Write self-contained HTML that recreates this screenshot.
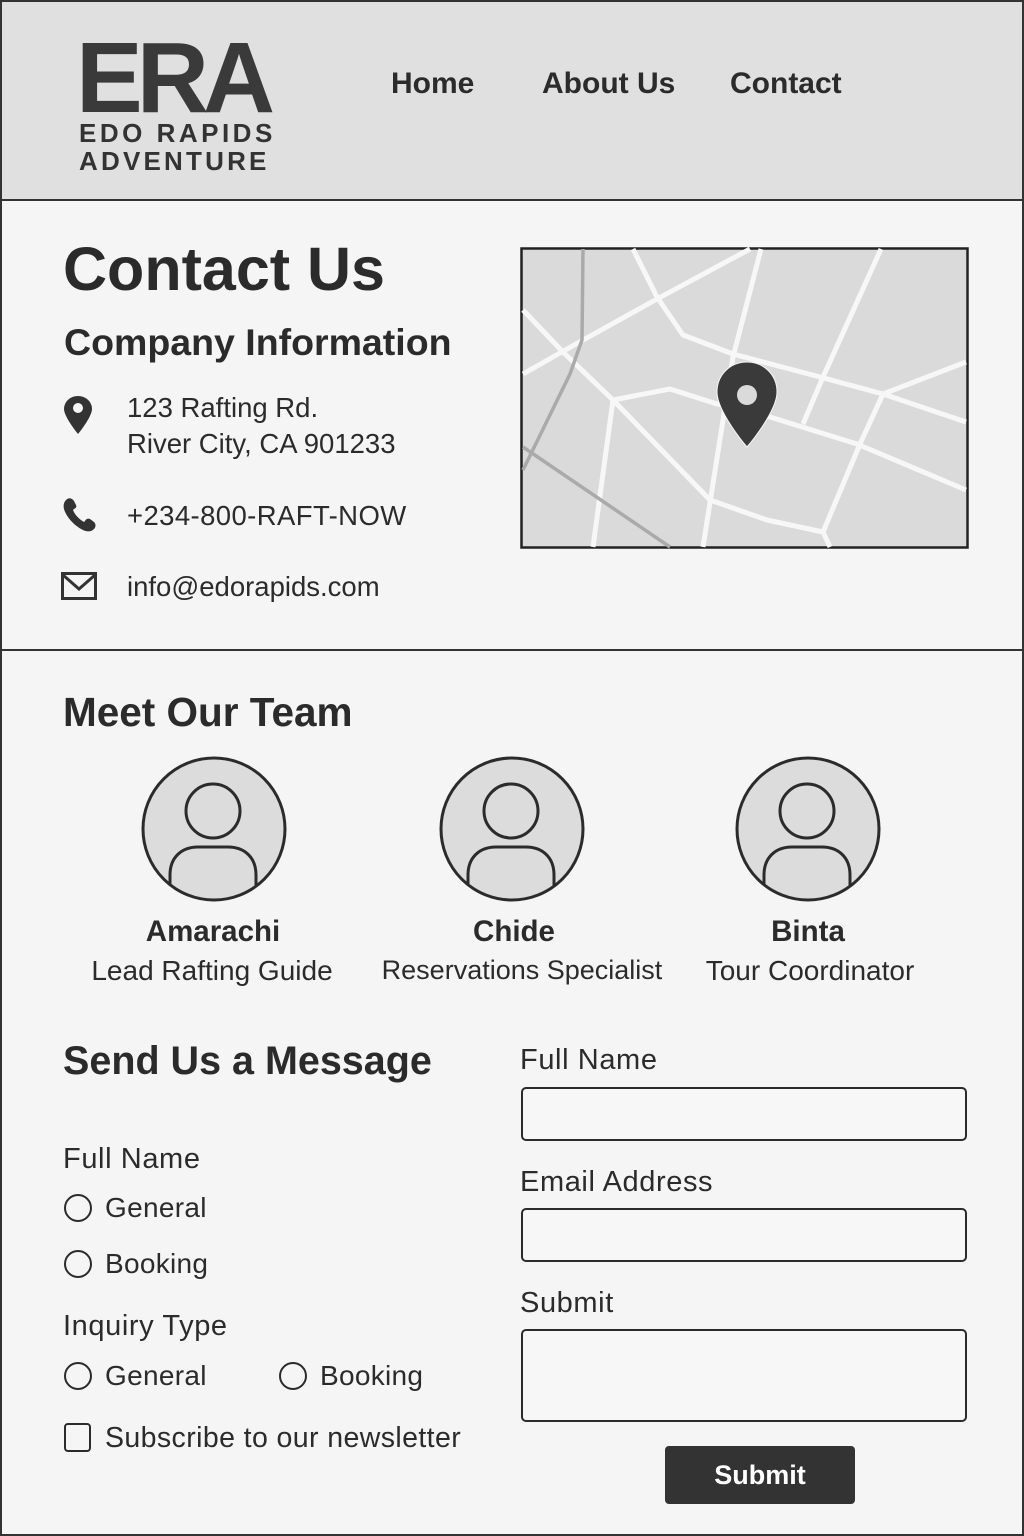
<!DOCTYPE html>
<html><head><meta charset="utf-8"><style>
*{margin:0;padding:0;box-sizing:border-box}
body{width:1024px;height:1536px;background:#f5f5f5;font-family:"Liberation Sans",sans-serif;color:#2b2b2b;position:relative;overflow:hidden}
.a{position:absolute;line-height:1;white-space:nowrap}
.b{font-weight:bold}
.frame{position:absolute;left:0;top:0;width:1024px;height:1536px;border:2px solid #333;pointer-events:none}
.hdr{position:absolute;left:0;top:0;width:1024px;height:201px;background:#e0e0e0;border-bottom:2px solid #333}
.line{position:absolute;left:0;width:1024px;height:2px;background:#333}
.inp{position:absolute;left:521px;width:446px;border:2px solid #2b2b2b;border-radius:5px;background:#f7f7f7}
.rad{position:absolute;width:28px;height:28px;border:2.5px solid #2b2b2b;border-radius:50%}
.l{font-size:29px;letter-spacing:0.6px}
.r{font-size:28px;letter-spacing:0.3px}
</style></head><body>
<div class="hdr"></div>
<div class="a b" style="left:76px;top:28px;font-size:100px;letter-spacing:-6px;color:#3a3a3a">ERA</div>
<div class="a b" style="left:79px;top:120px;font-size:26px;letter-spacing:3.5px;color:#333">EDO RAPIDS</div>
<div class="a b" style="left:79px;top:148px;font-size:26px;letter-spacing:3.2px;color:#333">ADVENTURE</div>
<div class="a b" style="left:391px;top:69px;font-size:30px">Home</div>
<div class="a b" style="left:542px;top:69px;font-size:30px">About Us</div>
<div class="a b" style="left:730px;top:69px;font-size:30px">Contact</div>

<div class="a b" style="left:63px;top:239px;font-size:61px">Contact Us</div>
<div class="a b" style="left:64px;top:324px;font-size:37.5px">Company Information</div>
<svg class="a" style="left:60px;top:394px" width="36" height="42" viewBox="0 0 36 42"><path d="M18 2C10 2 4 8 4 15c0 8 14 25 14 25s14-17 14-25C32 8 26 2 18 2z" fill="#333"/><circle cx="18" cy="14" r="5" fill="#f5f5f5"/></svg>
<div class="a" style="left:127px;top:394px;font-size:27.5px">123 Rafting Rd.</div>
<div class="a" style="left:127px;top:430px;font-size:27.5px">River City, CA 901233</div>
<svg class="a" style="left:60px;top:496px" width="40" height="36" viewBox="0 0 40 36"><path d="M6 4c3-3 6-2 8 1l2 4c1 2 0 3-2 4l-1 1c2 5 6 9 11 12l1-1c1-2 3-3 5-2l4 3c2 2 2 5 0 7-3 3-7 3-11 1C13 29 6 20 4 13c-1-4 0-7 2-9z" fill="#333"/></svg>
<div class="a" style="left:127px;top:502px;font-size:27.5px;letter-spacing:0.4px">+234-800-RAFT-NOW</div>
<svg class="a" style="left:60px;top:570px" width="38" height="32" viewBox="0 0 38 32"><rect x="2.5" y="3.5" width="33" height="25" fill="none" stroke="#333" stroke-width="3"/><path d="M3 5l16 14L35 5" fill="none" stroke="#333" stroke-width="3"/></svg>
<div class="a" style="left:127px;top:573px;font-size:27.5px">info@edorapids.com</div>

<svg class="a" style="left:520px;top:247px" width="449" height="302" viewBox="0 0 449 302">
<rect x="1.5" y="1.5" width="446" height="299" fill="#dadada" stroke="#222" stroke-width="2.5"/>
<g fill="none" stroke="#f7f7f7" stroke-width="5" stroke-linejoin="round">
<polyline points="113,2 137,50 163,88 213,107 300,130 363,147 446,175"/>
<polyline points="3,63 43,105 93,153 190,253 247,273 303,285 310,300"/>
<polyline points="3,127 47,102 137,52 230,2"/>
<polyline points="241,2 213,110 203,173 183,300"/>
<polyline points="361,2 303,130 283,177"/>
<polyline points="93,153 150,142 197,157 250,170 337,197 446,243"/>
<polyline points="446,115 363,147 340,197 303,285"/>
<polyline points="93,153 73,300"/>
</g>
<g fill="none" stroke="#aaa" stroke-width="3.5">
<polyline points="63,2 62,93 50,127 3,223"/>
<polyline points="3,200 150,300"/>
</g>
<path d="M227 115c-17 0-30 13-30 30 0 20 30 55 30 55s30-35 30-55c0-17-13-30-30-30z" fill="#3a3a3a" stroke="#f7f7f7" stroke-width="1"/>
<circle cx="227" cy="148" r="10" fill="#dadada"/>
</svg>

<div class="line" style="top:649px"></div>
<div class="a b" style="left:63px;top:692px;font-size:40.5px">Meet Our Team</div>

<svg class="a" style="left:140px;top:755px" width="148" height="148" viewBox="0 0 148 148"><defs><clipPath id="c"><circle cx="74" cy="74" r="71"/></clipPath></defs><circle cx="74" cy="74" r="71" fill="#dcdcdc"/><g clip-path="url(#c)"><circle cx="73" cy="56" r="27" fill="#dcdcdc" stroke="#2b2b2b" stroke-width="3"/><path d="M30 150V120c0-18 12-28 28-28h30c16 0 28 10 28 28v30" fill="#dcdcdc" stroke="#2b2b2b" stroke-width="3"/></g><circle cx="74" cy="74" r="71" fill="none" stroke="#2b2b2b" stroke-width="3"/></svg>
<svg class="a" style="left:438px;top:755px" width="148" height="148" viewBox="0 0 148 148"><defs><clipPath id="c2"><circle cx="74" cy="74" r="71"/></clipPath></defs><circle cx="74" cy="74" r="71" fill="#dcdcdc"/><g clip-path="url(#c2)"><circle cx="73" cy="56" r="27" fill="#dcdcdc" stroke="#2b2b2b" stroke-width="3"/><path d="M30 150V120c0-18 12-28 28-28h30c16 0 28 10 28 28v30" fill="#dcdcdc" stroke="#2b2b2b" stroke-width="3"/></g><circle cx="74" cy="74" r="71" fill="none" stroke="#2b2b2b" stroke-width="3"/></svg>
<svg class="a" style="left:734px;top:755px" width="148" height="148" viewBox="0 0 148 148"><defs><clipPath id="c3"><circle cx="74" cy="74" r="71"/></clipPath></defs><circle cx="74" cy="74" r="71" fill="#dcdcdc"/><g clip-path="url(#c3)"><circle cx="73" cy="56" r="27" fill="#dcdcdc" stroke="#2b2b2b" stroke-width="3"/><path d="M30 150V120c0-18 12-28 28-28h30c16 0 28 10 28 28v30" fill="#dcdcdc" stroke="#2b2b2b" stroke-width="3"/></g><circle cx="74" cy="74" r="71" fill="none" stroke="#2b2b2b" stroke-width="3"/></svg>

<div class="a b" style="left:113px;width:200px;text-align:center;top:917px;font-size:29.5px">Amarachi</div>
<div class="a" style="left:62px;width:300px;text-align:center;top:957px;font-size:28px">Lead Rafting Guide</div>
<div class="a b" style="left:414px;width:200px;text-align:center;top:917px;font-size:29.5px">Chide</div>
<div class="a" style="left:372px;width:300px;text-align:center;top:957px;font-size:27px">Reservations Specialist</div>
<div class="a b" style="left:708px;width:200px;text-align:center;top:917px;font-size:29.5px">Binta</div>
<div class="a" style="left:660px;width:300px;text-align:center;top:957px;font-size:28px">Tour Coordinator</div>

<div class="a b" style="left:63px;top:1042px;font-size:39.5px">Send Us a Message</div>
<div class="a l" style="left:63px;top:1145px">Full Name</div>
<div class="rad" style="left:64px;top:1194px"></div><div class="a r" style="left:105px;top:1194px">General</div>
<div class="rad" style="left:64px;top:1250px"></div><div class="a r" style="left:105px;top:1250px">Booking</div>
<div class="a l" style="left:63px;top:1312px">Inquiry Type</div>
<div class="rad" style="left:64px;top:1362px"></div><div class="a r" style="left:105px;top:1362px">General</div>
<div class="rad" style="left:279px;top:1362px"></div><div class="a r" style="left:320px;top:1362px">Booking</div>
<div style="position:absolute;left:64px;top:1423px;width:27px;height:29px;border:2.5px solid #2b2b2b;border-radius:4px"></div>
<div class="a" style="left:105px;top:1424px;font-size:28.5px;letter-spacing:0.4px">Subscribe to our newsletter</div>

<div class="a l" style="left:520px;top:1046px">Full Name</div>
<div class="inp" style="top:1087px;height:54px"></div>
<div class="a l" style="left:520px;top:1168px">Email Address</div>
<div class="inp" style="top:1208px;height:54px"></div>
<div class="a l" style="left:520px;top:1289px">Submit</div>
<div class="inp" style="top:1329px;height:93px"></div>
<div style="position:absolute;left:665px;top:1446px;width:190px;height:58px;background:#333;border-radius:4px;color:#fff;font-weight:bold;font-size:27px;line-height:58px;text-align:center">Submit</div>
<div class="frame"></div>
</body></html>
